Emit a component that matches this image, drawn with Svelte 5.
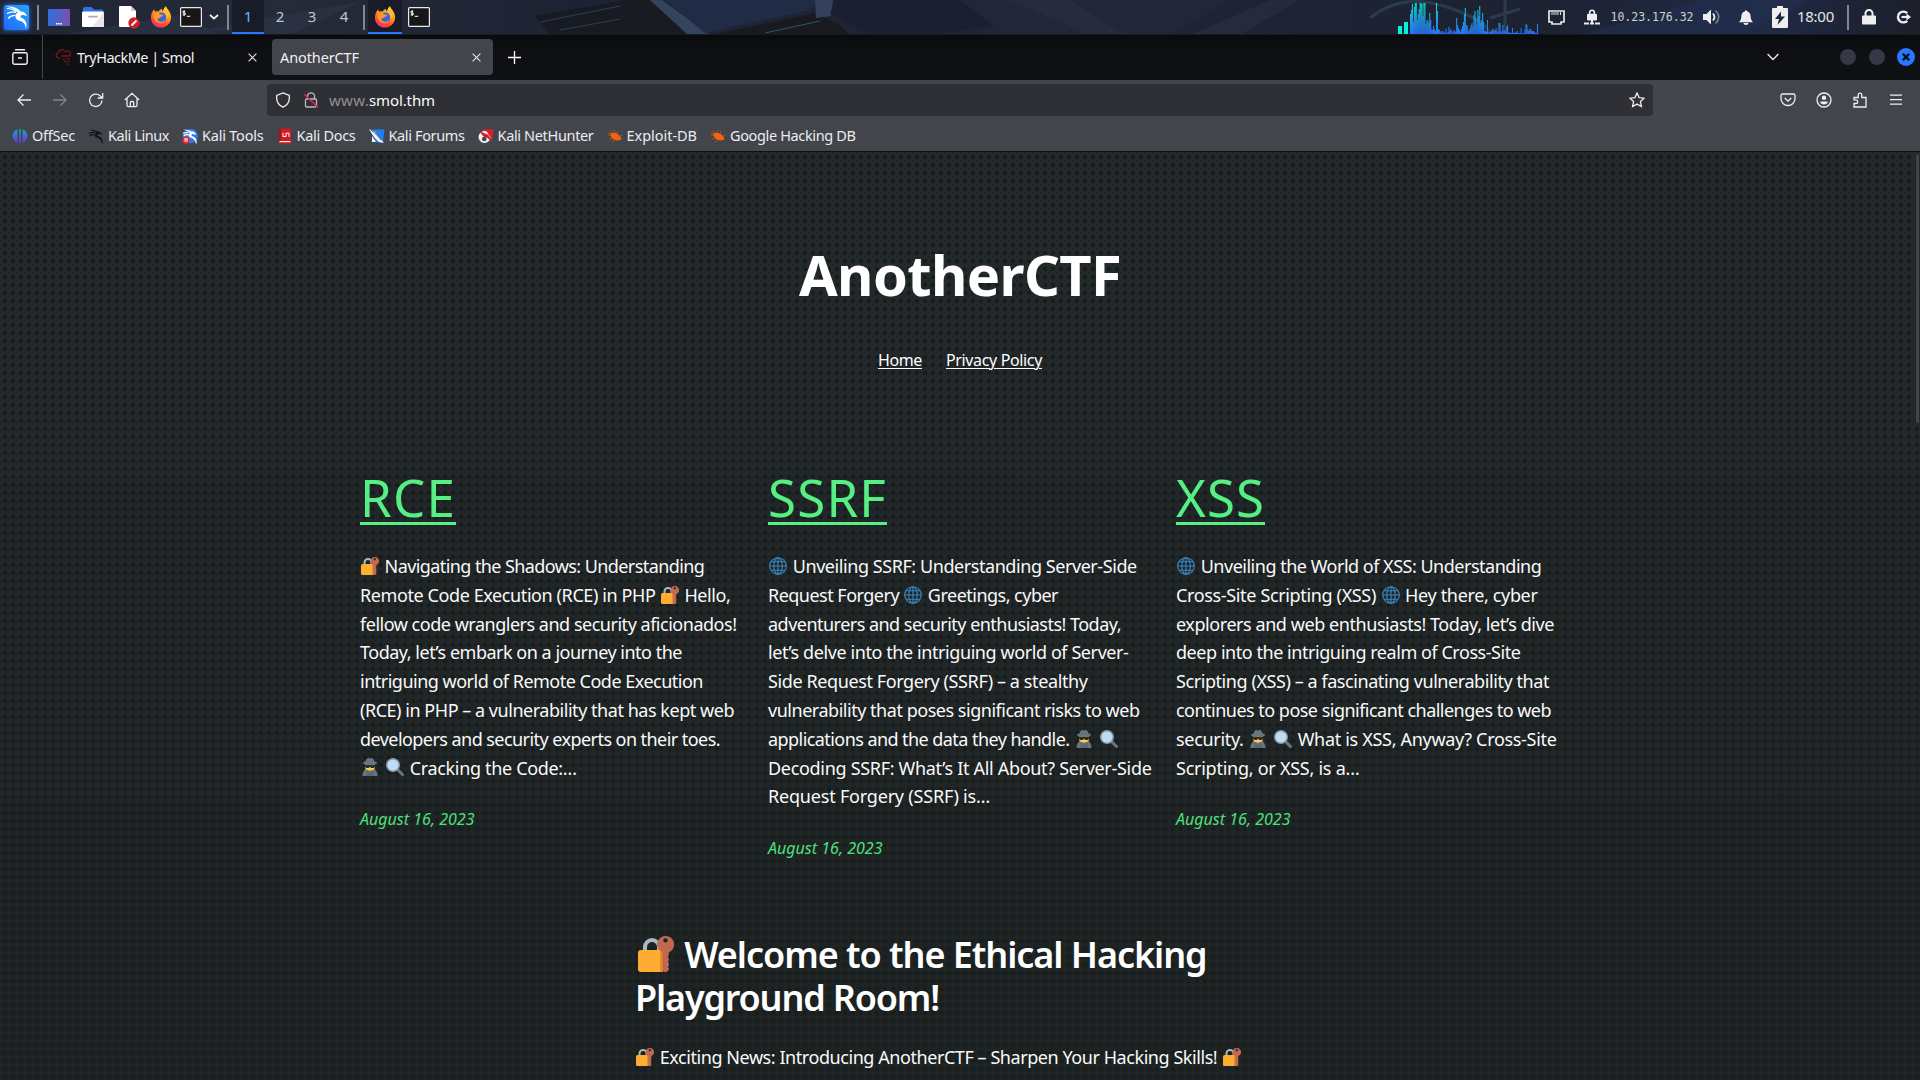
<script>
  // Spreads a run of text over a fixed measure through letter-spacing.
  function fit(node, width) {
    const range = document.createRange();
    range.selectNodeContents(node);
    const natural = range.getBoundingClientRect().width;
    const count = [...node.textContent].length;
    if (width && count) node.style.letterSpacing = `${(width - natural) / count}px`;
  }

  const bookmarks = [
    { icon: 'offsec', label: 'OffSec', w: 43 },
    { icon: 'dragon', label: 'Kali Linux', w: 61 },
    { icon: 'tools', label: 'Kali Tools', w: 61.5 },
    { icon: 'docs', label: 'Kali Docs', w: 59 },
    { icon: 'forums', label: 'Kali Forums', w: 76 },
    { icon: 'nethunter', label: 'Kali NetHunter', w: 96 },
    { icon: 'bug', label: 'Exploit-DB', w: 70.5 },
    { icon: 'bug', label: 'Google Hacking DB', w: 125.5 }
  ];

  const posts = [
    {
      title: 'RCE', w: 96,
      lines: [
        ['🔐 Navigating the Shadows: Understanding', 343],
        ['Remote Code Execution (RCE) in PHP 🔐 Hello,', 370.5],
        ['fellow code wranglers and security aficionados!', 376.5],
        ['Today, let’s embark on a journey into the', 322],
        ['intriguing world of Remote Code Execution', 343],
        ['(RCE) in PHP – a vulnerability that has kept web', 374],
        ['developers and security experts on their toes.', 360],
        ['🕵 🔍 Cracking the Code:…', 215.5]
      ]
    },
    {
      title: 'SSRF', w: 119,
      lines: [
        ['🌐 Unveiling SSRF: Understanding Server-Side', 367.5],
        ['Request Forgery 🌐 Greetings, cyber', 290],
        ['adventurers and security enthusiasts! Today,', 353],
        ['let’s delve into the intriguing world of Server-', 360.5],
        ['Side Request Forgery (SSRF) – a stealthy', 319.5],
        ['vulnerability that poses significant risks to web', 371.5],
        ['applications and the data they handle. 🕵 🔍', 349.5],
        ['Decoding SSRF: What’s It All About? Server-Side', 383.5],
        ['Request Forgery (SSRF) is…', 222]
      ]
    },
    {
      title: 'XSS', w: 89,
      lines: [
        ['🌐 Unveiling the World of XSS: Understanding', 364],
        ['Cross-Site Scripting (XSS) 🌐 Hey there, cyber', 361.5],
        ['explorers and web enthusiasts! Today, let’s dive', 378],
        ['deep into the intriguing realm of Cross-Site', 344.5],
        ['Scripting (XSS) – a fascinating vulnerability that', 373],
        ['continues to pose significant challenges to web', 375],
        ['security. 🕵 🔍 What is XSS, Anyway? Cross-Site', 380.5],
        ['Scripting, or XSS, is a…', 183.5]
      ]
    }
  ];

  const split = (text) => text.split(/(🔐|🌐|🕵|🔍)/u).filter((s) => s !== '');

  const load = [
    20, 24, 30, 12, 27, 31, 31, 14, 20, 25, 31, 31, 30, 18, 31, 31, 10, 13, 14, 11, 21, 14, 5, 4, 8, 5, 3, 31, 23, 5, 4, 2,
    3, 1, 3, 2, 1, 5, 1, 2, 7, 3, 5, 3, 1, 3, 4, 2, 16, 9, 6, 4, 2, 5, 8, 12, 20, 26, 9, 8, 3, 4, 6, 9, 11, 7, 19, 23,
    16, 9, 24, 18, 28, 11, 14, 21, 12, 3, 3, 2, 14, 1, 2, 2, 3, 5, 5, 3, 4, 6, 3, 2, 11, 11, 2, 3, 9, 3, 4, 2,
    7, 9, 1, 2, 1, 1, 6, 1, 1, 2, 1, 3, 1, 1, 1, 6, 1, 1, 1, 4, 10, 9, 4, 3, 5, 5, 3, 3, 3, 2, 1, 1, 10
  ];
</script>

{#snippet emoji(kind)}
  <svg class="emoji" viewBox="0 0 36 36">
    {#if kind === '🔐'}
      <path d="M7 18V11a7 7 0 0 1 14 0v5" fill="none" stroke="#aab8c2" stroke-width="4" />
      <rect x="0" y="14" width="26" height="22" rx="3" fill="#ffac33" />
      <path d="M22 16h3v20h-3z" fill="#e58e2c" />
      <path fill-rule="evenodd" d="M27.5 0a8.4 8.4 0 0 1 3.3 16.2v3.3l-1 1.2 1 1.3v2.5l-1 1 1 1.2V30l-1 1 1 1.3V34l-2.4 2h-2l-2-2V16.2A8.4 8.4 0 0 1 27.5 0zm0 2.2a2.2 2.2 0 1 0 .01 0z" fill="#c1694f" />
    {:else if kind === '🌐'}
      <g fill="none" stroke="#3b88c3" stroke-width="2.2">
        <circle cx="18" cy="18" r="16.6" />
        <ellipse cx="18" cy="18" rx="8.5" ry="16.6" />
        <path d="M18 1v34M1 18h34M4 9.5h28M4 26.5h28" />
      </g>
    {:else if kind === '🕵'}
      <path d="M3 36c0-5 1-8 3-10 1-4 4-5 8-5h8c4 0 7 1 8 5 2 2 3 5 3 10z" fill="#66757f" />
      <path d="M8 10h20v8c0 5-5 7-10 7S8 23 8 18z" fill="#ffcc4d" />
      <path d="M7 13h22v3l-3 4h-6l-2-3-2 3h-6l-3-4z" fill="#292f33" />
      <path d="M4 10c0-2 3-3 5-3 1-4 3-7 6-7l3 1 3-1c3 0 5 3 6 7 2 0 5 1 5 3s-5 3-14 3-14-1-14-3z" fill="#66757f" />
      <path d="M12 24l6 6 6-6 2 12H10z" fill="#5a6872" />
    {:else}
      <path d="M23 23l10 10" stroke="#66757f" stroke-width="6" stroke-linecap="round" />
      <circle cx="14" cy="14" r="12.5" fill="#bbddf5" stroke="#8899a6" stroke-width="3" />
    {/if}
  </svg>
{/snippet}

{#snippet rich(text)}{#each split(text) as part}{#if /[🔐🌐🕵🔍]/u.test(part)}{@render emoji(part)}{:else}{part}{/if}{/each}{/snippet}

{#snippet dragonShape()}
  <path d="M1 1.800c3.200-.4 6.400.2 8.600 1.600 1.600-.2 3 .6 3.700 2l1.500.5-1.400.900c-1.200-.7-2.300-.9-3.300-.5-1 .5-.9 1.500.2 1.900 2 .6 3.800 1.700 4.700 6-1.700-3-3.200-4-5.200-4.200-2.300-.3-3.500-1.600-3.200-3.200.2-1 .9-1.600 1.700-1.800C6.300 3.200 3.600 2.400 1 1.800z" />
  <path d="M.8 5.200c2-.6 4-.7 6-.4M1.500 8c1.500-1.200 3.500-1.500 5-1.300M11 10c2 1.200 3.200 3 3.300 5.500" fill="none" stroke="currentColor" stroke-width="1.100" />
{/snippet}

{#snippet firefox()}
  <svg class="fox" viewBox="0 0 24 24">
    <defs>
      <linearGradient id="foxFire" x1=".8" y1="0" x2=".3" y2="1"><stop offset="0" stop-color="#ffe03d" /><stop offset=".45" stop-color="#ff9322" /><stop offset=".8" stop-color="#ff4338" /><stop offset="1" stop-color="#f0307a" /></linearGradient>
    </defs>
    <path d="M4.500 3.500c.2 1.200.7 2 1.500 2.700 1-.4 2.300-.5 3.500 0C10 4.500 11.500 3.500 13 3c-.5 1 0 2 1 2.500 1-2.500 2-4.200 3.500-5.500.2 3 5.500 5.500 5.500 12.200C23 18.500 18.200 23.500 12 23.500S1 18.700 1 12.500C1 9 2.500 6 4.500 3.500z" fill="url(#foxFire)" />
    <circle cx="12.300" cy="12.500" r="5.500" fill="#3f65d8" />
    <path d="M5 7.500c2.500-1 5 .2 6.500 1.700l3 .3c-.3 1.500-2 2-3 2.500-.8 1.500-3.500 1-3.500 3 1 2.500 5 3 8 .5-1.500 4.500-9.500 4.500-11.500-1.500C3.500 12 3.700 9.500 5 7.500z" fill="#ff982a" />
    <path d="M14 5.500c3 1.500 5 5 3.500 9 2-1 2.600-3.500 2-6l-1.700-4z" fill="#ffbd35" />
  </svg>
{/snippet}

{#snippet terminal()}
  <svg class="term" viewBox="0 0 22 20">
    <rect x=".6" y=".6" width="20.800" height="18.800" rx="1" fill="#171717" stroke="#e8e8e8" stroke-width="1.200" />
    <path d="M5.200 4.300H3.600a.8.800 0 0 0 0 1.700h1a.9.900 0 0 1 0 1.800H2.700M4.100 3.300v5.700M6.800 9.300h3.400" fill="none" stroke="#fff" stroke-width="1" />
  </svg>
{/snippet}

{#snippet mark(name)}
  <svg class="mark" viewBox="0 0 16 16">
    {#if name === 'offsec'}
      <defs><linearGradient id="osg" gradientUnits="userSpaceOnUse" x1="0" y1="1" x2="0" y2="15"><stop offset="0" stop-color="#19a7ac" /><stop offset="1" stop-color="#6a34e8" /></linearGradient></defs>
      <path d="M5.500 1.300v13.400C2.600 13.900.6 11.300.6 8s2-5.900 4.900-6.700zM10.500 1.300v13.400c2.900-.8 4.900-3.400 4.900-6.700s-2-5.900-4.900-6.700zM7.200 1h1.600v14H7.200z" fill="url(#osg)" />
    {:else if name === 'dragon'}
      <g class="dark-dragon">{@render dragonShape()}</g>
    {:else if name === 'tools'}
      <circle cx="8.500" cy="8" r="7.300" fill="#2b7bea" />
      <g class="white-dragon">{@render dragonShape()}</g>
      <circle cx="4" cy="12.300" r="3.700" fill="#df2631" />
      <path d="M2.200 10.900h3.700M3.200 11v3M5 11v3" stroke="#fff" stroke-width=".9" fill="none" />
    {:else if name === 'docs'}
      <path d="M2 .5h12v15H2z" fill="#d41a20" />
      <path d="M2.500 13h11v1.200h-11z" fill="#eee" />
      <path d="M2 .5h2v12.300H2z" fill="#a81118" />
      <path d="M6 4.800v3.700h3V5.200h3v3.700" stroke="#fff" stroke-width="1" fill="none" />
    {:else if name === 'forums'}
      <path d="M1 1.500h14.500L14 14.500H7z" fill="#1f7ff0" />
      <path d="M0 1l6 3 4 5 5 6-5-1-4-4-3-4zM3 8l4 6H3z" fill="#f4f6f8" />
      <path d="M2 2l6 5 4 5" stroke="#33383e" stroke-width=".8" fill="none" />
    {:else if name === 'nethunter'}
      <path d="M4 1.500h11.500L14 12z" fill="#e11c2b" />
      <path d="M12.500 9.500A6 6 0 1 1 6.500 3l2.200.5z" fill="#f1f1f1" />
      <path d="M1 3l9.500 4 4 7.500-5-4.500-4-1.500z" fill="#cf1e2b" />
      <circle cx="6.300" cy="11" r="2.300" fill="#42454c" />
    {:else}
      <path d="M3.500 5.500c2.500-1.500 6-1 8.500 1.500 1.500 1.500 2.300 3 2.500 4.300-1.700 1.500-5 1.500-7.500.2C4.500 10.200 3 7.500 3.500 5.500z" fill="#f0640f" />
      <path d="M5 5L2.500 2.500M8 4.500l-1-2.600M10.500 5.500V3M4 8L.8 7M5.500 10.500L2 11M8 12l-3 2M13 8l2.500-1M1 5l3 1" stroke="#c8570f" stroke-width=".8" />
    {/if}
  </svg>
{/snippet}

<div class="screen">
  <div class="panel">
    <svg class="wall" viewBox="0 0 1920 35" preserveAspectRatio="none">
      <defs>
        <linearGradient id="wallBase"><stop offset="0" stop-color="#202535" /><stop offset=".15" stop-color="#262b39" /><stop offset=".3" stop-color="#1d2333" /><stop offset=".55" stop-color="#202536" /><stop offset=".8" stop-color="#1d2232" /><stop offset=".92" stop-color="#1f2a45" /><stop offset="1" stop-color="#1c1f2b" /></linearGradient>
        <linearGradient id="loadFill" gradientUnits="userSpaceOnUse" x1="0" y1="34" x2="0" y2="3"><stop offset="0" stop-color="#2777ff" /><stop offset=".5" stop-color="#1ba5e6" /><stop offset="1" stop-color="#00f5d4" /></linearGradient>
      </defs>
      <rect width="1920" height="35" fill="url(#wallBase)" />
      <path d="M200 30L360 2 290 35zM60 35l120-20 40 20z" fill="#2d3547" opacity=".6" />
      <path d="M535 16l90-16h25l40 35H550z" fill="#191b22" />
      <path d="M540 22l80-16M560 30l60-11" stroke="#27415c" stroke-width="1" />
      <path d="M650 0h12l48 35h-22z" fill="#34445e" />
      <path d="M665 0h155l-10 10-105 23z" fill="#202b45" />
      <path d="M710 35l105-22 25 12 10 10z" fill="#191a20" />
      <path d="M765 33l55-12" stroke="#2f536d" />
      <path d="M815 0h18l-2 16-15 2z" fill="#33415d" />
      <path d="M830 14l40 21h60l80-12L960 0H835z" fill="#1b2030" />
      <path d="M960 0l35 27-25 8h200L1230 0z" fill="#222737" />
      <path d="M1010 0l80 35h35L1070 0zM1190 35L1270 0h30l-60 35z" fill="#2a3142" opacity=".5" />
      <path d="M1370 18q30-24 70-13t50 28M1490 18l30-9M1505 0v35" fill="none" stroke="#2b3b4e" stroke-width="3" />
      <path d="M1580 35L1700 0h110l-70 35z" fill="#213052" opacity=".5" />
      <path d="M1398 26h4v8h-4zM1404 22h4v12h-4z" fill="#00f5d4" />
      {#each load as h, i}
        <rect x={1410 + i * 0.962} y={34 - h} width="1" height={h} fill="url(#loadFill)" />
      {/each}
      <rect y="34" width="1920" height="1" fill="#171a21" />
    </svg>
    <div class="panel-row">
      <svg class="kali" viewBox="0 0 25 25"><defs><linearGradient id="kg" x1="0" y1="1" x2="1" y2="0"><stop offset="0" stop-color="#2268f8" /><stop offset="1" stop-color="#25a6fb" /></linearGradient></defs><rect width="25" height="25" rx="2.500" fill="url(#kg)" />
        <path d="M2 1.500c6-.5 12 1 15 5.200 2.200-.4 4 .6 4.700 2.600l1.900.9-1.800.6c-2.500-1.400-5.400-.9-5.300.9.1 1.500 4.500 1.400 5.800 6.300.4 2 .3 4-.4 5.700-.5-4-2-6.700-5.400-7.600-3.300-.7-5.300-2.700-5-5.400.1-1.300.9-2.300 2.200-2.900C11.500 4.700 7 2.500 2 1.500z" fill="#fff" />
        <path d="M3 8.500c3-1.500 6-2 9-1.200M4 13.500c2-2.200 5-3.200 7.500-3.100M3 3.500c3 .2 7 1 9.500 3" fill="none" stroke="#fff" stroke-width="1.200" />
      </svg>
      <i class="bar"></i>
      <svg class="desk" viewBox="0 0 22 17"><defs><linearGradient id="dg"><stop offset="0" stop-color="#2f6fdc" /><stop offset="1" stop-color="#7950ad" /></linearGradient></defs><rect width="22" height="17" rx="1" fill="url(#dg)" /><path d="M8 14.800h6" stroke="#fff" stroke-width="1.500" stroke-dasharray="1.500 .7" /></svg>
      <svg class="folder" viewBox="0 0 22 20"><path d="M1 6V1.500Q1 0 2.500 0h7L12 2.500h8q1 0 1 1V6z" fill="#2d73e6" /><rect y="4.500" width="22" height="15.500" rx="1" fill="#fff" /><path d="M22 5v15H10z" fill="#e8e8e8" /><path d="M7 9.700h8" stroke="#aaa" stroke-width="1.800" stroke-linecap="round" /></svg>
      <svg class="file" viewBox="0 0 21 23"><path d="M0 1q0-1 1-1h11l5 5v15q0 1-1 1H1q-1 0-1-1z" fill="#fff" /><path d="M12 0l5 5h-5z" fill="#ccc" /><circle cx="15" cy="17" r="5.700" fill="#cf1f24" /><path d="M12.500 19.500l5-5" stroke="#fff" stroke-width="2" /></svg>
      {@render firefox()}
      {@render terminal()}
      <svg class="caret" viewBox="0 0 10 6"><path d="M1 1l4 3.500L9 1" fill="none" stroke="#eee" stroke-width="1.700" /></svg>
      <i class="bar after-caret"></i>
      <div class="spaces"><b class="on">1</b><b>2</b><b>3</b><b>4</b></div>
      <i class="bar task-bar"></i>
      <div class="task">{@render firefox()}</div>
      {@render terminal()}
      <div class="tray">
        <svg class="eth" viewBox="0 0 17 15"><path d="M1 1h15v11h-3v2H4v-2H1z" fill="none" stroke="#e8e8e8" stroke-width="1.700" /><path d="M4 2v3M6 2v3M8 2v3M10 2v3M12.500 2v3" stroke="#ddd" /></svg>
        <svg class="vpn" viewBox="0 0 16 16"><path d="M5.700 5V3.500a2.300 2.300 0 0 1 4.600 0V5" fill="none" stroke="#eee" stroke-width="1.600" /><rect x="3" y="4.800" width="10" height="6.700" rx="1.200" fill="#eee" /><path d="M8 11v3M0 14.500h5M6 14.500h4M11 14.500h5" stroke="#eee" stroke-width="2" /></svg>
        <span class="ip" use:fit={83}>10.23.176.32</span>
        <svg class="vol" viewBox="0 0 18 16"><path d="M0 5h3.500L8 .5v15L3.500 11H0z" fill="#eee" /><path d="M10 4.500q3 3.500 0 7" fill="none" stroke="#eee" stroke-width="1.800" /><path d="M12.500 1.500q6.500 6.500 0 13" fill="none" stroke="#777b84" stroke-width="1.700" /></svg>
        <svg class="bell" viewBox="0 0 14 15"><path d="M7 0l1.400 1.500C11 2.300 11.500 4.500 11.700 7c.1 2 .8 3.500 2.300 5.300H0C1.500 10.500 2.200 9 2.300 7c.2-2.500.7-4.700 3.300-5.500zM4.500 13h5a2.500 2 0 0 1-5 0z" fill="#eee" /></svg>
        <svg class="batt" viewBox="0 0 16 22"><path d="M5 0h6v2h4q1 0 1 1v18q0 1-1 1H1q-1 0-1-1V3q0-1 1-1h4z" fill="#eee" /><path d="M9 5.500L3 13h4l-1.500 6L13 10.500H9z" fill="#1f2740" /></svg>
        <span class="clock" use:fit={37}>18:00</span>
        <i class="bar"></i>
        <svg class="lock" viewBox="0 0 14 16"><path d="M3.500 7V4.500a3.500 3.500 0 0 1 7 0V7" fill="none" stroke="#eee" stroke-width="2" /><rect y="6.500" width="14" height="9" rx="1" fill="#eee" /></svg>
        <svg class="out" viewBox="0 0 15 14"><path d="M11.200 3.200A5.400 5.400 0 1 0 11.200 10.800" fill="none" stroke="#eee" stroke-width="2.400" /><path d="M5.500 7H12" stroke="#eee" stroke-width="2.200" /><path d="M10.500 3.500L15 7l-4.500 3.500z" fill="#eee" /></svg>
      </div>
    </div>
  </div>

  <div class="tabs">
    <div class="view">
      <svg viewBox="0 0 16 16"><path d="M3.500.8h9" stroke="#eee" stroke-width="1.400" stroke-linecap="round" /><path d="M.8 5.500q0-1.700 1.700-1.700h11q1.700 0 1.700 1.700v7.700q0 2-2 2H2.800q-2 0-2-2zM6 9h4" fill="none" stroke="#eee" stroke-width="1.400" /></svg>
    </div>
    <div class="tab">
      <svg class="cloud" viewBox="0 0 16 16"><path d="M5 9H3.500A2.600 2.600 0 0 1 3 3.900 4 4 0 0 1 10.300 2.700 2.900 2.900 0 0 1 14.500 7M6.500 7h8" fill="none" stroke="#b3141d" stroke-width="1" /><path d="M8 10h2M11 10h4M9 12.500h3M13 12.500h2M11 15h3" stroke="#8f1820" stroke-width=".9" /></svg>
      <span use:fit={117}>TryHackMe | Smol</span>
      <svg class="x" viewBox="0 0 9 9"><path d="M.6.600l7.800 7.800M8.400.600L.6 8.400" stroke="#e6e6e6" stroke-width="1.100" /></svg>
    </div>
    <div class="tab active">
      <span use:fit={79}>AnotherCTF</span>
      <svg class="x" viewBox="0 0 9 9"><path d="M.6.600l7.800 7.800M8.400.600L.6 8.400" stroke="#e6e6e6" stroke-width="1.100" /></svg>
    </div>
    <svg class="plus" viewBox="0 0 13 13"><path d="M6.500 0v13M0 6.500h13" stroke="#fff" stroke-width="1.300" /></svg>
    <div class="wm">
      <svg class="down" viewBox="0 0 12 8"><path d="M.6 1L6 6.500 11.400 1" fill="none" stroke="#eee" stroke-width="1.300" /></svg>
      <i></i><i></i>
      <svg class="close" viewBox="0 0 18 18"><circle cx="9" cy="9" r="9" fill="#2777ff" /><path d="M5.800 5.800l6.400 6.400M12.200 5.800l-6.400 6.400" stroke="#0d0e14" stroke-width="2.300" /></svg>
    </div>
  </div>

  <div class="toolbar">
    <div class="nav-icons">
      <svg viewBox="0 0 16 16"><path d="M15 8H2M7.500 2.500L2 8l5.500 5.500" /></svg>
      <svg class="dim" viewBox="0 0 16 16"><path d="M1 8h13M8.500 2.500L14 8l-5.500 5.500" /></svg>
      <svg viewBox="0 0 16 16"><path d="M14 8.500A6.200 6.200 0 1 1 12 3.700l2 1.700M14.700 1v5H9.700" /></svg>
      <svg viewBox="0 0 16 16"><path d="M.8 8L8 1.300 15.200 8M3 6.500v6.700q0 1.500 1.500 1.500h7q1.500 0 1.500-1.500V6.500M6.300 14.500v-4q0-1 1-1h1.400q1 0 1 1v4" /></svg>
    </div>
    <div class="url">
      <svg viewBox="0 0 16 16"><path d="M8 .9L14.300 3.500v2.800c0 4-2.300 7-6.300 8.900-4-1.900-6.300-4.900-6.300-8.900V3.500z" /></svg>
      <svg class="insecure" viewBox="0 0 16 16"><path d="M4.500 7V4.300a3.500 3.500 0 0 1 7 0V7M3.700 7h8.600q1.200 0 1.200 1.200v5.600q0 1.200-1.200 1.200H3.700q-1.200 0-1.200-1.200V8.200Q2.500 7 3.700 7z" /><path class="slash" d="M1.200 2.200l13.500 13" /></svg>
      <span class="host"><span class="sub" use:fit={40}>www.</span><span use:fit={66}>smol.thm</span></span>
      <svg class="star" viewBox="0 0 16 16"><path d="M8 1l2.100 4.600 5 .6-3.700 3.400 1 5L8 12.100l-4.400 2.500 1-5L.9 6.200l5-.6z" /></svg>
    </div>
    <div class="right-icons">
      <svg viewBox="0 0 16 16"><path d="M2.500 2h11q1.500 0 1.500 1.500v3a7 7 0 0 1-14 0v-3Q1 2 2.500 2zM4.700 6L8 9.200 11.300 6" /></svg>
      <svg viewBox="0 0 16 16"><circle cx="8" cy="8" r="7" /><circle class="solid" cx="8" cy="5.800" r="2.200" /><path class="solid" d="M4.200 9.500h7.600q-.3 3-3.800 3t-3.800-3z" /></svg>
      <svg viewBox="0 0 16 16"><path d="M2 15V11.500h1.800a1.800 1.800 0 0 0 0-3.700H2V5.500h4.200V3a1.800 1.800 0 0 1 3.600 0v2.500H14V15z" /></svg>
      <svg viewBox="0 0 16 16"><path d="M2 3.200h12M2 7.700h12M2 12.200h12" /></svg>
    </div>
  </div>

  <div class="bookmarks">
    {#each bookmarks as b}
      <div class="bm">{@render mark(b.icon)}<span use:fit={b.w}>{b.label}</span></div>
    {/each}
  </div>

  <main>
    <div class="scroll"></div>
    <h1><span use:fit={322}>AnotherCTF</span></h1>
    <nav><a href="#home" use:fit={44}>Home</a><a href="#privacy" use:fit={96}>Privacy Policy</a></nav>
    <div class="posts">
      {#each posts as post}
        <article>
          <h3><a href="#post" use:fit={post.w}>{post.title}</a></h3>
          <p>{#each post.lines as [text, w]}<span class="line"><span use:fit={w}>{@render rich(text)}</span></span>{/each}</p>
          <time><span use:fit={114.500}>August 16, 2023</span></time>
        </article>
      {/each}
    </div>
    <section>
      <h2>
        <span class="line"><span use:fit={569}>{@render rich('🔐 Welcome to the Ethical Hacking')}</span></span>
        <span class="line"><span use:fit={304}>Playground Room!</span></span>
      </h2>
      <p><span class="line"><span use:fit={604.500}>{@render rich('🔐 Exciting News: Introducing AnotherCTF – Sharpen Your Hacking Skills! 🔐')}</span></span></p>
    </section>
  </main>
</div>

<style>
  :global(body) { background: #1d2323; overflow: hidden; }
  .screen { width: 1920px; height: 1080px; overflow: hidden; display: flex; flex-direction: column; font-family: "Noto Sans", "Open Sans", sans-serif; color: #fff; }
  svg { display: block; flex: none; }
  span { white-space: nowrap; }

  .panel { position: relative; height: 35px; flex: none; }
  .wall { position: absolute; inset: 0; width: 1920px; height: 35px; }
  .panel-row { position: relative; display: flex; align-items: center; height: 34px; padding-left: 4px; }
  .kali { width: 25px; height: 25px; filter: drop-shadow(0 0 2px #2777ff); }
  .bar { width: 2px; height: 25px; background: #85878d; margin-left: 8px; flex: none; }
  .desk { width: 22px; height: 17px; margin-left: 9px; }
  .folder { width: 22px; height: 20px; margin-left: 12px; }
  .file { width: 21px; height: 23px; margin-left: 15px; }
  .fox { width: 22px; height: 22px; margin-left: 10px; }
  .term { width: 22px; height: 20px; margin-left: 8px; }
  .caret { width: 10px; height: 6px; margin-left: 7px; }
  .after-caret { margin-left: 8px; }
  .spaces { display: flex; align-self: stretch; margin-left: 3px; }
  .spaces b { width: 32px; box-sizing: border-box; height: 34px; line-height: 33px; text-align: center; font-weight: 400; font-size: 15px; color: #b9c7d6; }
  .spaces .on, .task { background: #171c28; border-bottom: 2px solid #2777ff; color: #6eb2ff; }
  .task-bar { margin-left: 3px; }
  .task { width: 34px; height: 34px; box-sizing: border-box; margin-left: 3px; display: flex; align-items: center; justify-content: center; }
  .task .fox { margin: 2px 0 0; }
  .task + .term { margin-left: 6px; }
  .tray { display: flex; align-items: center; margin-left: auto; padding-right: 9px; }
  .eth { width: 17px; height: 15px; }
  .vpn { width: 16px; height: 16px; margin-left: 19px; }
  .ip { font: 11.500px "DejaVu Sans Mono", monospace; color: #d3d1cd; width: 83px; margin-left: 10.500px; margin-top: -1px; }
  .vol { width: 18px; height: 16px; margin-left: 9.500px; }
  .bell { width: 14px; height: 15px; margin-left: 18px; }
  .batt { width: 16px; height: 22px; margin-left: 19px; }
  .clock { width: 37px; margin-left: 9px; font-size: 15px; line-height: 31px; margin-top: -2px; color: #e6e6e6; }
  .tray .bar { margin-left: 13px; }
  .lock { width: 14px; height: 16px; margin-left: 13px; }
  .out { width: 15px; height: 14px; margin-left: 20px; }

  .tabs { height: 45px; flex: none; background: linear-gradient(#0a0b0d, #0f1014 40%); display: flex; align-items: center; font-size: 14.500px; line-height: 20px; color: #f0f0f0; }
  .view { width: 42px; height: 44px; align-self: flex-start; border-right: 1px solid #45474d; display: flex; align-items: center; }
  .view svg { width: 16px; height: 16px; margin-left: 12px; }
  .tab { display: flex; align-items: center; width: 226px; box-sizing: border-box; height: 36px; padding: 0 12px; margin-top: -1px; }
  .tab .x { width: 9px; height: 9px; margin-left: auto; }
  .cloud { width: 16px; height: 16px; margin-right: 6px; }
  .tab.active { margin-left: 3px; width: 221px; padding: 0 12px 0 8px; background: #43454d; border-radius: 4px; }
  .plus { width: 13px; height: 13px; margin-left: 15px; }
  .wm { display: flex; align-items: center; margin-left: auto; padding-right: 5px; margin-top: -1px; }
  .down { width: 12px; height: 8px; margin-right: 61px; }
  .wm i { width: 16px; height: 16px; border-radius: 50%; background: #343945; margin-right: 13px; }
  .wm i + i { margin-right: 12px; }
  .close { width: 18px; height: 18px; }

  .toolbar { height: 40px; flex: none; background: #43454d; display: flex; align-items: center; }
  .toolbar svg { width: 16px; height: 16px; fill: none; stroke: #eeeef0; stroke-width: 1.300; }
  .nav-icons { display: flex; gap: 20px; padding-left: 16px; width: 267px; box-sizing: border-box; }
  .nav-icons svg:last-child { margin-left: -.5px; }
  .toolbar .dim { stroke: #83858a; }
  .url { width: 1386px; height: 32px; border-radius: 4px; background: #2f3035; display: flex; align-items: center; padding: 0 8px; box-sizing: border-box; }
  .toolbar .insecure { margin-left: 12px; stroke: #b9b9bc; }
  .toolbar .slash { stroke: #e22850; stroke-width: 1.500; }
  .host { margin-left: 10px; font-size: 15px; line-height: 22px; display: flex; color: #fbfbfe; }
  .sub { color: #8f9094; }
  .star { margin-left: auto; }
  .right-icons { display: flex; gap: 20px; margin-left: 127px; }
  .toolbar .solid { fill: #eeeef0; stroke: none; }

  .bookmarks { height: 32px; flex: none; box-sizing: border-box; background: #43454d; border-bottom: 1px solid #0e0f12; display: flex; gap: 13px; padding: 0 12px; align-items: center; font-size: 14.500px; line-height: 20px; color: #ececee; }
  .bm { display: flex; align-items: center; gap: 4px; }
  .bm span { margin-top: -2px; }
  .mark { width: 16px; height: 16px; }
  .dark-dragon { fill: #141414; color: #141414; }
  .white-dragon { fill: #fff; color: #fff; }

  main {
    position: relative; flex: 1; box-sizing: border-box; padding-top: 87px;
    background: radial-gradient(circle at 5px 5px, #181c1d 1.900px, transparent 2.500px) 0 0 / 8px 8px, linear-gradient(#242a2b, #1d2323);
  }
  .scroll { position: absolute; right: 1px; top: 2px; width: 3px; height: 269px; border-radius: 2px; background: #404546; }
  h1, h2, h3, p { margin: 0; font-weight: 400; }
  h1 { font-size: 56px; line-height: 70px; font-weight: 700; text-align: center; }
  a { color: inherit; }
  nav { display: flex; justify-content: center; gap: 24px; margin-top: 38px; font-size: 16px; line-height: 26px; }
  nav a { text-underline-offset: 2px; text-decoration-thickness: 1px; }
  .posts { display: grid; grid-template-columns: repeat(3, 384px); column-gap: 24px; justify-content: center; margin-top: 94px; }
  h3 { font-size: 51px; line-height: 60px; color: #55ef84; }
  h3 a { text-decoration-thickness: 3px; text-underline-offset: 5px; text-decoration-skip-ink: none; }
  p { font-size: 18px; line-height: 28.800px; color: #fafafa; }
  article p { margin-top: 25px; }
  .line { display: block; white-space: nowrap; }
  .emoji { display: inline-block; width: 1em; height: 1em; vertical-align: -.1em; margin: 0 .07em; }
  time { display: block; margin-top: 24px; font-size: 16px; line-height: 26px; font-style: italic; color: #4ee07c; }
  section { width: 650px; margin: 72px 0 0 635px; }
  h2 { font-size: 36px; line-height: 43px; font-weight: 600; }
  section p { margin-top: 24px; }
</style>
